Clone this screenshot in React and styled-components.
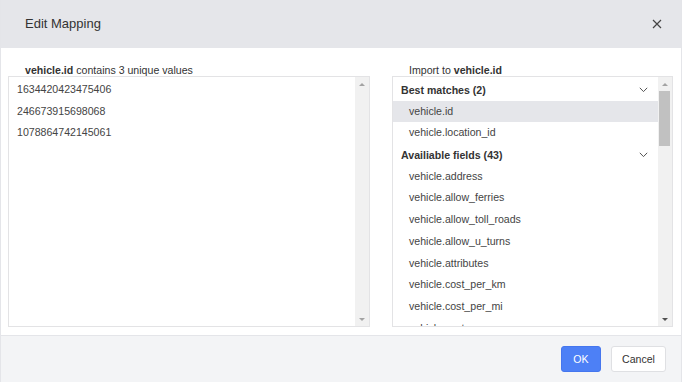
import React from 'react';
import styled, { createGlobalStyle } from 'styled-components';

const GlobalStyle = createGlobalStyle`
  html, body {
    margin: 0;
    padding: 0;
    background: #ffffff;
  }
  body {
    font-family: "Liberation Sans", Arial, sans-serif;
    color: #333;
  }
  * {
    box-sizing: border-box;
  }
`;

const Modal = styled.div`
  width: 682px;
  height: 382px;
  display: flex;
  flex-direction: column;
  border-left: 1px solid #e4e5e9;
  border-right: 1px solid #e4e5e9;
  background: #fff;
  overflow: hidden;
`;

const Header = styled.div`
  height: 48px;
  flex: none;
  display: flex;
  align-items: center;
  justify-content: space-between;
  padding: 0 19px 0 24px;
  background: #e5e6ea;
`;

const Title = styled.div`
  font-size: 13px;
  color: #333;
  margin-top: -1px;
`;

const CloseButton = styled.button`
  width: 11px;
  height: 11px;
  padding: 0;
  border: 0;
  background: none;
  display: flex;
  align-items: center;
  justify-content: center;
  cursor: pointer;
  svg {
    display: block;
  }
`;

const Body = styled.div`
  flex: 1;
  display: grid;
  grid-template-columns: 362px 281px;
  column-gap: 22px;
  padding: 16px 8px 8px 7px;
`;

const Column = styled.div`
  display: flex;
  flex-direction: column;
  min-height: 0;
`;

const Label = styled.div`
  height: 12px;
  line-height: 12px;
  padding-left: 17px;
  font-size: 10.6px;
  color: #333;
  white-space: nowrap;
  b {
    font-weight: bold;
  }
`;

const Box = styled.div`
  height: 251px;
  border: 1px solid #e3e3e5;
  display: flex;
  overflow: hidden;
`;

const List = styled.div`
  flex: 1;
  overflow: hidden;
  padding-top: 2px;
`;

const Row = styled.div`
  height: 21.7px;
  line-height: 21.7px;
  font-size: 10.6px;
  white-space: nowrap;
  padding-left: ${p => (p.$indent ? 16 : 8)}px;
  padding-right: 10px;
  color: #444;
  background: ${p => (p.$selected ? '#e5e6ea' : 'transparent')};
`;

const GroupRow = styled.div`
  height: 21.7px;
  display: flex;
  align-items: center;
  justify-content: space-between;
  padding: 0 10px 0 8px;
  font-size: 10.6px;
  font-weight: bold;
  color: #333;
  white-space: nowrap;
`;

const Scrollbar = styled.div`
  width: 14px;
  flex: none;
  display: flex;
  flex-direction: column;
  background: #f1f1f1;
`;

const Arrow = styled.div`
  height: 14px;
  flex: none;
  display: flex;
  align-items: center;
  justify-content: center;
  &::after {
    content: '';
    width: 0;
    height: 0;
    border-left: 3px solid transparent;
    border-right: 3px solid transparent;
    ${p =>
      p.$down
        ? `border-top: 3px solid ${p.$dark ? '#505050' : '#a3a3a3'};`
        : `border-bottom: 3px solid ${p.$dark ? '#505050' : '#a3a3a3'};`}
  }
`;

const Track = styled.div`
  flex: 1;
  position: relative;
`;

const Thumb = styled.div`
  position: absolute;
  left: 1px;
  right: 2px;
  top: 0;
  background: #c1c1c1;
`;

const Footer = styled.div`
  height: 47px;
  flex: none;
  display: flex;
  align-items: center;
  justify-content: flex-end;
  gap: 10px;
  padding-right: 15px;
  border-top: 1px solid #e4e5e9;
  background: #f3f4f6;
`;

const Button = styled.button`
  height: 26px;
  width: ${p => p.$width}px;
  padding: 0;
  border-radius: 3px;
  font-family: inherit;
  font-size: 10.6px;
  line-height: 24px;
  cursor: pointer;
  border: 1px solid ${p => (p.$primary ? '#4576ee' : '#dfe0e3')};
  background: ${p => (p.$primary ? '#4d80f6' : '#ffffff')};
  color: ${p => (p.$primary ? '#ffffff' : '#333333')};
`;

const Chevron = () => (
  <svg width="9" height="6" viewBox="0 0 9 6" fill="none">
    <path d="M0.8 0.8 L4.5 4.6 L8.2 0.8" stroke="#555" strokeWidth="1" />
  </svg>
);

const values = ['1634420423475406', '246673915698068', '1078864742145061'];

const best = ['vehicle.id', 'vehicle.location_id'];

const fields = [
  'vehicle.address',
  'vehicle.allow_ferries',
  'vehicle.allow_toll_roads',
  'vehicle.allow_u_turns',
  'vehicle.attributes',
  'vehicle.cost_per_km',
  'vehicle.cost_per_mi',
  'vehicle.custom',
  'vehicle.depot_id',
];

const ScrollBar = ({ thumb, thumbHeight, darkDown }) => (
  <Scrollbar>
    <Arrow />
    <Track>{thumb && <Thumb style={{ height: thumbHeight }} />}</Track>
    <Arrow $down $dark={darkDown} />
  </Scrollbar>
);

export default function App() {
  return (
    <>
      <GlobalStyle />
      <Modal>
        <Header>
          <Title>Edit Mapping</Title>
          <CloseButton aria-label="Close">
            <svg width="10" height="10" viewBox="0 0 10 10">
              <path d="M1 1 L9 9 M9 1 L1 9" stroke="#444" strokeWidth="1.2" />
            </svg>
          </CloseButton>
        </Header>
        <Body>
          <Column>
            <Label>
              <b>vehicle.id</b> contains 3 unique values
            </Label>
            <Box>
              <List>
                {values.map(v => (
                  <Row key={v}>{v}</Row>
                ))}
              </List>
              <ScrollBar />
            </Box>
          </Column>
          <Column>
            <Label>
              Import to <b>vehicle.id</b>
            </Label>
            <Box>
              <List>
                <GroupRow>
                  Best matches (2)
                  <Chevron />
                </GroupRow>
                {best.map((f, i) => (
                  <Row key={f} $indent $selected={i === 0}>
                    {f}
                  </Row>
                ))}
                <GroupRow>
                  Availiable fields (43)
                  <Chevron />
                </GroupRow>
                {fields.map(f => (
                  <Row key={f} $indent>
                    {f}
                  </Row>
                ))}
              </List>
              <ScrollBar thumb thumbHeight={55} darkDown />
            </Box>
          </Column>
        </Body>
        <Footer>
          <Button $primary $width={40}>OK</Button>
          <Button $width={55}>Cancel</Button>
        </Footer>
      </Modal>
    </>
  );
}
